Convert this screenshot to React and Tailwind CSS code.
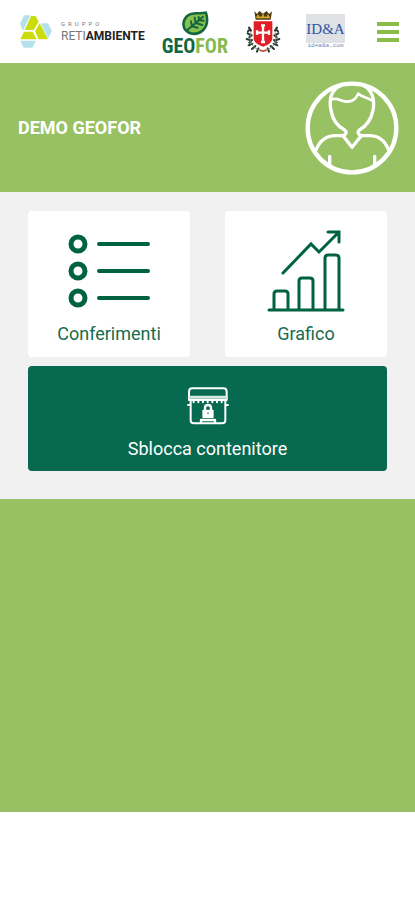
import React from "react";

function RetiAmbienteLogo() {
  return (
    <div className="flex items-center gap-[9px]">
      <svg className="h-[33px] w-8 shrink-0" viewBox="11 14 96 99" aria-hidden="true">
        <path d="M23 15H42L20 62L11 40Z" fill="#b5e2ea" />
        <path d="M73 39H95L107 62L95 85Z" fill="#b5e2ea" />
        <path d="M12 91H59L48 112H22Z" fill="#b5e2ea" />
        <path d="M44 17H58L67 34L52 59H25Z" fill="#cbdc0c" />
        <path d="M23 64H49L61 87H12Z" fill="#cbdc0c" />
        <path d="M56 62L70 39L95 87H67Z" fill="#cbdc0c" />
      </svg>
      <div className="flex flex-col pt-px">
        <span className="text-[6px] leading-[8px] tracking-[3px] text-[#777]">GRUPPO</span>
        <span className="text-[12px] leading-4 text-[#777]">
          RETI<b className="font-bold text-[#222]">AMBIENTE</b>
        </span>
      </div>
    </div>
  );
}

function GeoforLogo() {
  return (
    <div className="flex flex-col items-center pt-1">
      <svg className="h-[25px] w-7" viewBox="0 0 84 75" aria-hidden="true">
        <path d="M77 1C86 24 84 48 66 63C47 78 22 75 9 58C-3 38 6 14 27 6C43 0 60 5 77 1Z" fill="#13653f" />
        <path d="M72 9C77 29 75 45 61 57C46 68 26 66 15 53C7 38 13 20 30 13C44 8 58 12 72 9Z" fill="#86c04d" />
        <path
          d="M20 56L66 17M33 46L30 31M44 36L41 20M54 28L53 18M33 46L50 50M44 36L64 42M54 28L68 29"
          fill="none"
          stroke="#13653f"
          strokeWidth="6"
          strokeLinecap="round"
        />
      </svg>
      <span className="font-['Roboto_Condensed','Liberation_Sans_Narrow',Roboto,sans-serif] text-[20px] font-bold leading-5 text-[#13653f]">
        GEO<span className="text-[#86b94f]">FOR</span>
      </span>
    </div>
  );
}

function Crest() {
  return (
    <svg className="h-11 w-9 shrink-0" viewBox="0 0 108 132" aria-hidden="true">
      <path d="M28 4L36 12L43 3L54 11L65 3L72 12L81 4L77 29H32Z" fill="#4e3a14" />
      <path d="M34 22H75M39 14V20M54 13V20M69 14V20" stroke="#d8ac2b" strokeWidth="5" />
      <g fill="none" stroke="#26382d" strokeWidth="6" strokeLinecap="round">
        <path d="M12 53L18 62M8 70L18 76M5 87L17 91M11 106L22 101M21 117L31 108M36 125L40 115M16 58L9 64M20 76L13 82M21 90L13 98" />
        <path d="M96 53L90 62M100 70L90 76M103 87L91 91M97 106L86 101M87 117L77 108M72 125L68 115M92 58L99 64M88 76L95 82M87 90L95 98" />
      </g>
      <path d="M18 67C10 92 20 112 42 119M90 67C98 92 88 112 66 119" fill="none" stroke="#75806f" strokeWidth="3" />
      <path d="M26 34H82V84C82 98 69 105 54 110C39 105 26 98 26 84Z" fill="#e01e25" />
      <path d="M54 47V95M36 68H72M48 46H60M48 96H60M36 61V75M72 61V75" stroke="#fff" strokeWidth="7" />
      <path d="M43 119Q54 128 65 119" fill="none" stroke="#ba4a36" strokeWidth="5" />
    </svg>
  );
}

function IdaLogo() {
  return (
    <div className="flex w-[39px] flex-col items-center">
      <div className="flex h-[29px] w-full items-center justify-center bg-[#dfe1e5] pt-px font-['Liberation_Serif',serif] text-[15px] leading-5 text-[#2e55a4]">
        ID&amp;A
      </div>
      <span className="font-['Liberation_Mono',monospace] text-[6px] leading-[6px] text-[#6f88bd]">
        idea&amp;a.com
      </span>
    </div>
  );
}

function Avatar() {
  return (
    <svg
      className="h-[94px] w-[94px] shrink-0"
      viewBox="0 0 282 282"
      fill="none"
      stroke="#fff"
      strokeWidth="10"
      strokeLinejoin="round"
      strokeLinecap="round"
      aria-hidden="true"
    >
      <circle cx="141" cy="141" r="133" strokeWidth="13" />
      <path d="M106 14C75 29 72 58 78 88C83 116 97 136 119 147C127 153 124 160 114 164L141 199L169 164C158 160 156 153 163 147C185 135 198 116 204 88C211 53 199 25 174 13" />
      <path d="M78 56C97 47 109 63 129 62C148 60 153 51 160 38C173 49 187 49 205 61" strokeWidth="8" />
      <path d="M114 164H92C59 164 43 183 34 205M169 164H193C224 164 241 183 250 205M74 226V254M209 226V254" />
    </svg>
  );
}

function ListIcon() {
  return (
    <svg className="h-[74px] w-[82px]" viewBox="0 0 82 74" fill="none" stroke="#00633f" strokeLinecap="round" aria-hidden="true">
      <g strokeWidth="5">
        <circle cx="10" cy="10" r="7" />
        <circle cx="10" cy="37" r="7" />
        <circle cx="10" cy="64" r="7" />
      </g>
      <path d="M31 10H80M31 37H80M31 64H80" strokeWidth="4" />
    </svg>
  );
}

function ChartIcon() {
  return (
    <svg className="h-[82px] w-[78px]" viewBox="0 0 78 82" fill="none" stroke="#00633f" strokeWidth="3" strokeLinecap="round" aria-hidden="true">
      <path d="M2 80H76M7 79V64Q7 61 10 61H18Q21 61 21 64V79M32 79V51Q32 48 35 48H43Q46 48 46 51V79M58 79V28Q58 25 61 25H69Q72 25 72 28V79" />
      <path d="M16 43L44 14L52 22L71 3M61 2H72V12" />
    </svg>
  );
}

function BinIcon() {
  return (
    <svg className="h-[38px] w-[42px]" viewBox="0 0 126 114" fill="none" stroke="#fff" strokeWidth="6" strokeLinejoin="round" strokeLinecap="round" aria-hidden="true">
      <path d="M6 39V14Q6 4 16 4H109Q119 4 119 14V39Z" />
      <path d="M7 31H118" stroke="#d5e8e2" strokeWidth="9" />
      <path d="M11 42V100Q11 109 20 109H106Q115 109 115 100V42M3 54H9M117 54H123" />
      <path d="M20 41V46M34 41V46M48 41V46M62 41V46M76 41V46M90 41V46M104 41V46" />
      <path d="M42 107V99H84V107" strokeWidth="7" />
      <rect x="46" y="68" width="34" height="25" rx="3" fill="#fff" stroke="none" />
      <path d="M54 70V62Q54 54 63 54Q72 54 72 62V70" strokeWidth="7" />
      <circle cx="63" cy="79" r="3" fill="#67a290" stroke="none" />
    </svg>
  );
}

export default function App() {
  return (
    <div className="w-full bg-white font-[Roboto,sans-serif]">
      <header className="flex h-[63px] items-center justify-between pl-5 pr-4">
        <div className="flex items-center gap-[17px]">
          <RetiAmbienteLogo />
          <GeoforLogo />
          <Crest />
        </div>
        <div className="flex items-center gap-8">
          <IdaLogo />
          <button type="button" aria-label="Menu" className="flex w-[22px] flex-col gap-1">
            <span className="h-1 w-full bg-[#8bbd4b]" />
            <span className="h-1 w-full bg-[#8bbd4b]" />
            <span className="h-1 w-full bg-[#8bbd4b]" />
          </button>
        </div>
      </header>

      <main className="bg-[#97c163]">
        <section className="flex h-[129px] items-center justify-between pl-[18px] pr-4">
          <h1 className="text-[18px] font-bold leading-6 text-white">DEMO GEOFOR</h1>
          <Avatar />
        </section>

        <section className="flex flex-col gap-[9px] bg-[#f1f1f1] px-7 pb-7 pt-[19px]">
          <div className="grid grid-cols-2 gap-[35px]">
            <button type="button" className="flex h-[146px] flex-col items-center justify-end gap-[10px] rounded bg-white pb-[11px] text-[18px] leading-6 text-[#176b4e]">
              <span className="flex h-[82px] items-center">
                <ListIcon />
              </span>
              Conferimenti
            </button>
            <button type="button" className="flex h-[146px] flex-col items-center justify-end gap-[10px] rounded bg-white pb-[11px] text-[18px] leading-6 text-[#176b4e]">
              <span className="flex h-[82px] items-center">
                <ChartIcon />
              </span>
              Grafico
            </button>
          </div>
          <button type="button" className="flex h-[105px] flex-col items-center justify-end gap-3 rounded bg-[#07694f] pb-[10px] text-[18px] leading-6 text-white">
            <BinIcon />
            Sblocca contenitore
          </button>
        </section>

        <div className="h-[313px]" />
      </main>
    </div>
  );
}
